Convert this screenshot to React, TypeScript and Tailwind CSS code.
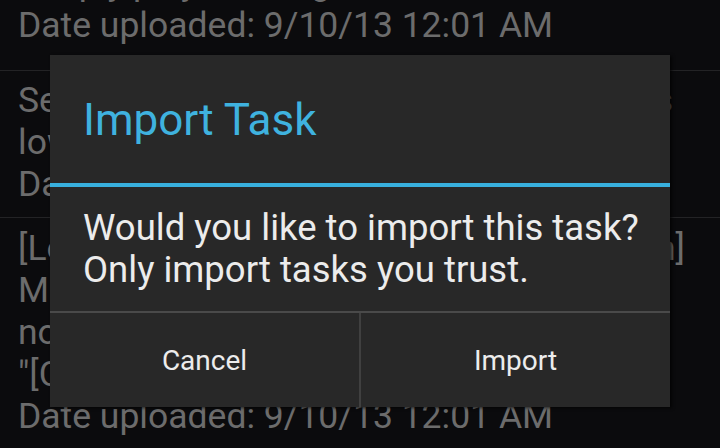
import React from "react";

const font = { fontFamily: "Roboto, 'Noto Sans', sans-serif" };

function Line({ children }: { children: React.ReactNode }) {
  return <div className="h-[42px] leading-[42px] whitespace-nowrap">{children}</div>;
}

function JLine({ children, w }: { children: React.ReactNode; w: string }) {
  return (
    <div className={`h-[42px] leading-[42px] overflow-hidden [text-align-last:justify] ${w}`}>{children}</div>
  );
}

export default function App() {
  return (
    <div className="relative w-[720px] h-[448px] overflow-hidden bg-[#0b0b0d]" style={font}>
      {/* background list */}
      <div className="flex flex-col text-[35.5px] text-[#6c6c6c] pl-[18px] -mt-[38px] pb-[24px]">
        <Line>Simply plays a song</Line>
        <Line>Date uploaded: 9/10/13 12:01 AM</Line>
      </div>
      <div className="h-px bg-[#232325]" />
      <div className="flex flex-col text-[35.5px] text-[#6c6c6c] pl-[18px] pt-[8px] pb-[12px]">
        <JLine w="w-[655px]">Sends a text message when battery is</JLine>
        <Line>low</Line>
        <Line>Date uploaded: 9/10/13 12:01 AM</Line>
      </div>
      <div className="h-px bg-[#232325]" />
      <div className="flex flex-col text-[35.5px] text-[#6c6c6c] pl-[18px] pt-[9px]">
        <JLine w="w-[667px]">[Location] Ringer on at [Location]</JLine>
        <Line>Mute phone when</Line>
        <Line>not at home</Line>
        <Line>"[Custom]"</Line>
        <Line>Date uploaded: 9/10/13 12:01 AM</Line>
      </div>

      {/* dialog */}
      <div className="absolute left-[50px] top-[55px] w-[620px] h-[352px] bg-[#282828] flex flex-col shadow-[2px_1px_3px_rgba(0,0,0,0.7)]">
        <div className="h-[128px] pl-[33px] pt-[40px]">
          <div className="text-[44px] leading-[50px] text-[#3fb2df] whitespace-nowrap">Import Task</div>
        </div>
        <div className="h-[4px] bg-[#38b0de]" />
        <div className="h-[124px] pl-[33px] pt-[20px] text-[36.5px] leading-[42px] text-[#ececec] whitespace-nowrap">
          <div>Would you like to import this task?</div>
          <div>Only import tasks you trust.</div>
        </div>
        <div className="h-[2px] bg-[#4a4a4a]" />
        <div className="flex flex-1">
          <div className="flex-1 flex items-center justify-center text-[28px] text-[#ececec] pt-[2px]">Cancel</div>
          <div className="w-[2px] bg-[#404040]" />
          <div className="flex-1 flex items-center justify-center text-[28px] text-[#ececec] pt-[2px]">Import</div>
        </div>
      </div>
    </div>
  );
}
